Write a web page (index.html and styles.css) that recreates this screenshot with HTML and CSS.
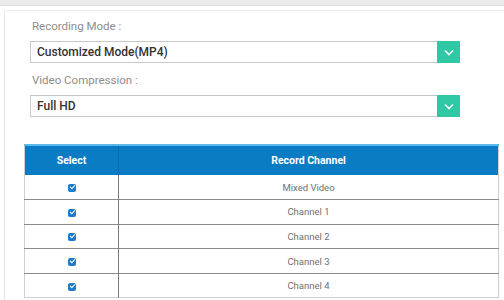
FILE: index.html
```html
<html lang="en">
<head>
    <link rel="stylesheet" href="styles.css">
</head>
<body>
    <div class="top-bar"></div>
    <div class="panel">
        <div class="form-area">
            <div class="field-label">Recording Mode :</div>
            <div class="select-box">
                <span class="select-value">Customized Mode(MP4)</span>
                <span class="select-btn">
                    <svg width="10" height="7" viewBox="0 0 10 7"><path d="M1 1.5 L5 5.5 L9 1.5" fill="none" stroke="#fff" stroke-width="1.6"/></svg>
                </span>
            </div>
            <div class="field-label">Video Compression :</div>
            <div class="select-box">
                <span class="select-value">Full HD</span>
                <span class="select-btn">
                    <svg width="10" height="7" viewBox="0 0 10 7"><path d="M1 1.5 L5 5.5 L9 1.5" fill="none" stroke="#fff" stroke-width="1.6"/></svg>
                </span>
            </div>
        </div>

        <table class="channel-table">
            <tr>
                <th class="col-select">Select</th>
                <th>Record Channel</th>
            </tr>
            <tr><td><span class="check"></span></td><td>Mixed Video</td></tr>
            <tr><td><span class="check"></span></td><td>Channel 1</td></tr>
            <tr><td><span class="check"></span></td><td>Channel 2</td></tr>
            <tr><td><span class="check"></span></td><td>Channel 3</td></tr>
            <tr><td><span class="check"></span></td><td>Channel 4</td></tr>
        </table>
    </div>
</body>
</html>
```

FILE: styles.css
```css
body {
    font-family: Roboto, "Liberation Sans", Arial, sans-serif;
    background-color: white;
    margin: 0;
    padding: 0;
}
.top-bar {
    height: 5px;
    background-color: #ebebeb;
    border-bottom: 1px solid #dcdcdc;
}
.panel {
    margin: 4px 0 0 4px;
    padding: 7px 5px 2px 19px;
    border-left: 1px solid #e6e6e6;
    border-top: 1px solid #eeeeee;
}
.form-area {
    margin-left: 6px;
    width: 430px;
}
.field-label {
    font-size: 11.5px;
    color: #8e8e8e;
    height: 16px;
    line-height: 16px;
    margin-bottom: 7px;
    padding-left: 2px;
}
.select-box {
    display: flex;
    align-items: center;
    height: 22px;
    border: 1px solid #c9c9c9;
    border-right: none;
    box-sizing: border-box;
    margin-bottom: 9px;
}
.select-value {
    flex: 1;
    padding-left: 6px;
    font-size: 12px;
    font-weight: 500;
    color: #333;
}
.select-btn {
    width: 23px;
    height: 22px;
    background-color: #2ec9a4;
    display: flex;
    align-items: center;
    justify-content: center;
}
.channel-table {
    margin-top: 27px;
    width: 475px;
    border-collapse: collapse;
    border: 1px solid #cfcfcf;
    font-size: 9.5px;
    color: #707070;
}
.channel-table th {
    height: 30px;
    box-sizing: border-box;
    background-color: #0a7cc4;
    color: white;
    font-weight: bold;
    font-size: 10.5px;
    padding: 0;
    border-top: 2px solid #5cb8e8;
}
.channel-table th.col-select {
    width: 94px;
    border-right: 1px solid #0a6aa8;
}
.channel-table td {
    height: 24.6px;
    padding: 0;
    text-align: center;
    border-top: 1px solid #8c8c8c;
}
.channel-table tr:nth-child(2) td {
    border-top: none;
}
.channel-table td:first-child {
    border-right: 1px solid #7a7a7a;
}
.check {
    display: inline-block;
    width: 8px;
    height: 8px;
    border-radius: 2px;
    background-color: #1f7bc8;
    position: relative;
    top: 1px;
}
.check::after {
    content: "";
    position: absolute;
    left: 2px;
    top: 1px;
    width: 4px;
    height: 2px;
    border-left: 1px solid white;
    border-bottom: 1px solid white;
    transform: rotate(-45deg);
}
```
